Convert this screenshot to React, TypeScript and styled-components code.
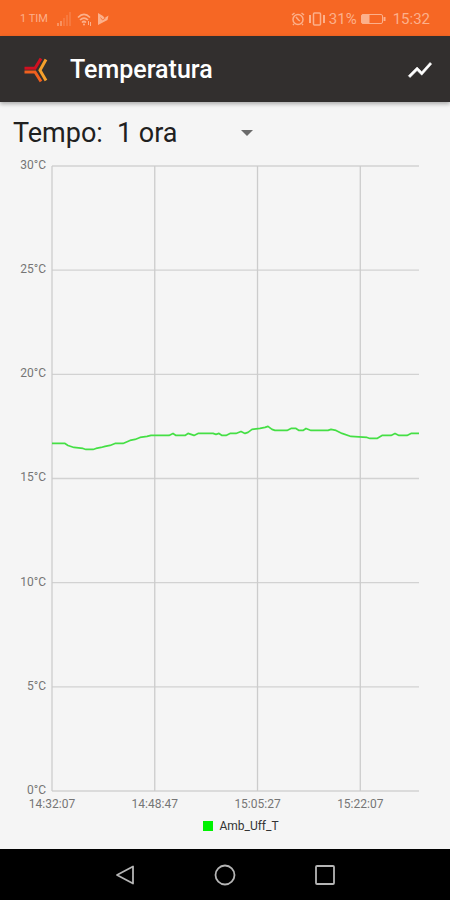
import React, { useState } from "react";
import styled, { createGlobalStyle } from "styled-components";

const GlobalStyle = createGlobalStyle`
  * { box-sizing: border-box; }
  body {
    margin: 0;
    background: #f5f5f5;
    font-family: Roboto, "Liberation Sans", sans-serif;
  }
`;

const Screen = styled.div`
  display: flex;
  flex-direction: column;
  min-height: 100vh;
  background: #f5f5f5;
`;

const StatusBar = styled.div`
  display: flex;
  justify-content: space-between;
  align-items: center;
  height: 36px;
  padding: 2px 20px 0;
  background: #f66724;
  color: #fcb08b;
`;

const StatusGroup = styled.div<{ $gap: number }>`
  display: flex;
  align-items: center;
  gap: ${(p) => p.$gap}px;
`;

const StatusText = styled.span<{ $size: number }>`
  font-size: ${(p) => p.$size}px;
  line-height: 18px;
`;

const Carrier = styled(StatusText)`
  margin-right: 4px;
`;

const Clock = styled(StatusText)`
  margin-left: 4px;
`;

const AppBar = styled.header`
  display: flex;
  align-items: center;
  height: 66px;
  padding: 2px 16px 0 24px;
  background: #322f2e;
  box-shadow: 0 2px 4px rgba(0, 0, 0, 0.3);
`;

const Title = styled.h1`
  flex: 1;
  margin: 0 0 0 21px;
  color: #fff;
  font-size: 25px;
  line-height: 32px;
  font-weight: 500;
`;

const IconButton = styled.button`
  display: flex;
  align-items: center;
  justify-content: center;
  padding: 0;
  border: 0;
  background: none;
  cursor: pointer;
`;

const Content = styled.main`
  flex: 1;
  display: flex;
  flex-direction: column;
  padding: 14px 31px 16px 13px;
`;

const Filter = styled.div`
  display: flex;
  align-items: center;
  height: 34px;
  color: #202020;
  font-size: 27px;
  line-height: 34px;
`;

const FilterLabel = styled.label`
  margin-right: 14px;
`;

const SelectWrap = styled.div`
  display: flex;
  align-items: center;
  width: 136px;
`;

const Select = styled.select`
  flex: 1;
  min-width: 0;
  padding: 0;
  border: 0;
  appearance: none;
  background: none;
  color: inherit;
  font: inherit;
`;

const Chart = styled.section`
  flex: 1;
  display: grid;
  grid-template-columns: 33px minmax(0, 1fr);
  grid-template-rows: 1fr auto auto;
  column-gap: 6px;
  padding-top: 16px;
`;

const YAxis = styled.div`
  display: flex;
  flex-direction: column;
  justify-content: space-between;
  margin: -7px 0 -5px;
  color: #757575;
  font-size: 12px;
  line-height: 12px;
  text-align: right;
`;

const Plot = styled.svg`
  display: block;
  width: 100%;
  height: 100%;
  min-height: 200px;
  overflow: visible;
  contain: size;
`;

const XAxis = styled.div`
  grid-column: 2;
  display: grid;
  grid-template-columns: repeat(4, 1fr);
  width: 112%;
  margin-left: -14%;
  padding-top: 7px;
  color: #757575;
  font-size: 12px;
  line-height: 12px;
  text-align: center;
`;

const Legend = styled.div`
  grid-column: 1 / -1;
  display: flex;
  align-items: center;
  justify-content: center;
  gap: 6px;
  margin: 9px 0 0 50px;
  color: #333;
  font-size: 12px;
  line-height: 14px;
`;

const Swatch = styled.span`
  width: 10px;
  height: 10px;
  background: #00f200;
`;

const NavBar = styled.nav`
  display: flex;
  align-items: center;
  justify-content: center;
  gap: 76px;
  height: 51px;
  background: #000;
`;

const X_SPAN = 367;
const Y_SPAN = 624;
const DEGREES = [30, 25, 20, 15, 10, 5, 0];
const TIMES = ["14:32:07", "14:48:47", "15:05:27", "15:22:07"];

const READINGS =
  "0,277 13,277 16,279 22,281 31,282 34,283 41,283 44,282 49,281 53,280 58,279 63,277 71,277 78,274 83,273 88,271 95,270 99,269 117,269 121,267 124,269 133,269 136,267 139,268 142,269 146,267 161,267 164,268 167,267 170,269 174,269 178,267 184,267 189,265 193,267 196,266 200,263 208,262 213,261 216,260 220,263 223,264 235,264 239,262 244,262 247,264 251,264 254,262 259,264 276,264 279,263 284,264 290,267 299,270 315,271 318,272 325,272 330,269 339,269 343,267 347,269 355,269 359,267 367,267";

function StatusIcons() {
  return (
    <>
      <svg width="15" height="14" viewBox="0 0 15 14" fill="currentColor">
        <path d="M0 11h2v3H0zM3 9h2v5H3z" opacity="0.6" />
        <path d="M6 6h2v8H6zM9 3h2v11H9zM12 0h2v14h-2z" opacity="0.25" />
      </svg>
      <svg width="15" height="13" viewBox="0 0 15 13" fill="none" stroke="currentColor" strokeWidth="1.700">
        <path d="M1 4.500Q7 -1.500 13 4.500M3 7Q7 3 11 7M5 9.500Q7 7.500 9 9.500" />
        <circle cx="7" cy="11.500" r="1" fill="currentColor" stroke="none" />
        <path d="M11.500 8v4M13.500 9v4" strokeWidth="1" />
      </svg>
      <svg width="12" height="12" viewBox="0 0 12 12" fill="currentColor">
        <path d="M1 0L6 3 7.500 5 11.500 2.500 10.500 7 1 12z" />
        <path d="M3.500 4.500l2 2.500 3-2" fill="none" stroke="#f66724" strokeWidth="0.800" />
      </svg>
    </>
  );
}

function AlarmIcon() {
  return (
    <svg width="14" height="14" viewBox="0 0 14 14" fill="none" stroke="currentColor" strokeWidth="1.500">
      <circle cx="7" cy="7.500" r="5" />
      <path d="M5 5l2.500 3L9 9M1 3l2.500-2M13 3l-2.500-2M3 12l-1 1M11 12l1 1" />
    </svg>
  );
}

function VibrateIcon() {
  return (
    <svg width="18" height="14" viewBox="0 0 18 14" fill="none" stroke="currentColor" strokeWidth="1.500">
      <rect x="5.500" y="1" width="7" height="12" rx="1" />
      <path d="M2 3v8M16 3v8" strokeWidth="2" />
    </svg>
  );
}

function BatteryIcon() {
  return (
    <svg width="26" height="12" viewBox="0 0 26 12" fill="none" stroke="currentColor">
      <rect x="1.500" y="1.500" width="21" height="9" rx="1.500" />
      <path d="M2 2h7v8H2z" fill="currentColor" />
      <path d="M24.500 4v4" strokeWidth="2" />
    </svg>
  );
}

function Logo() {
  return (
    <svg width="25" height="26" viewBox="0 0 25 26" fill="none" strokeWidth="3">
      <path d="M0.500 11.300H11L17 1.500" stroke="#d01020" />
      <path d="M0.500 15H11L17 24.500" stroke="#f0601e" />
      <path d="M22 2.500L16 13.200L22 23.500" stroke="#f5a02c" />
    </svg>
  );
}

export default function App() {
  const [range, setRange] = useState("1 ora");
  return (
    <>
      <GlobalStyle />
      <Screen>
        <StatusBar>
          <StatusGroup $gap={5}>
            <Carrier $size={11}>1 TIM</Carrier>
            <StatusIcons />
          </StatusGroup>
          <StatusGroup $gap={3}>
            <AlarmIcon />
            <VibrateIcon />
            <StatusText $size={15}>31%</StatusText>
            <BatteryIcon />
            <Clock $size={15}>15:32</Clock>
          </StatusGroup>
        </StatusBar>
        <AppBar>
          <Logo />
          <Title>Temperatura</Title>
          <IconButton aria-label="Grafico">
            <svg width="28" height="28" viewBox="0 0 24 24" fill="#fff" stroke="#fff" strokeWidth="0.500">
              <path d="M3.500 18.490l6-6.010 4 4L22 6.920l-1.410-1.410-7.090 7.970-4-4L2 16.990z" />
            </svg>
          </IconButton>
        </AppBar>
        <Content>
          <Filter>
            <FilterLabel htmlFor="range">Tempo:</FilterLabel>
            <SelectWrap>
              <Select id="range" value={range} onChange={(e) => setRange(e.target.value)}>
                <option>1 ora</option>
              </Select>
              <svg width="12" height="6" viewBox="0 0 12 6" fill="#6b6b6b" aria-hidden="true">
                <path d="M0 0h12L6 6z" />
              </svg>
            </SelectWrap>
          </Filter>
          <Chart>
            <YAxis>
              {DEGREES.map((d) => (
                <span key={d}>{d}°C</span>
              ))}
            </YAxis>
            <Plot viewBox={`0 0 ${X_SPAN} ${Y_SPAN}`} preserveAspectRatio="none" fill="none">
              {DEGREES.map((d) => {
                const y = Y_SPAN - (d / 30) * Y_SPAN;
                return <line key={d} x1="0" x2={X_SPAN} y1={y} y2={y} stroke="#d2d2d2" strokeWidth="1.300" vectorEffect="non-scaling-stroke" />;
              })}
              {TIMES.map((t, i) => {
                const x = i * 0.28 * X_SPAN;
                return <line key={t} x1={x} x2={x} y1="0" y2={Y_SPAN} stroke="#cccccc" strokeWidth="1.300" vectorEffect="non-scaling-stroke" />;
              })}
              <polyline points={READINGS} stroke="#45df45" strokeWidth="1.700" strokeLinejoin="round" vectorEffect="non-scaling-stroke" />
            </Plot>
            <XAxis>
              {TIMES.map((t) => (
                <span key={t}>{t}</span>
              ))}
            </XAxis>
            <Legend>
              <Swatch />
              Amb_Uff_T
            </Legend>
          </Chart>
        </Content>
        <NavBar>
          <IconButton aria-label="Indietro">
            <svg width="24" height="24" viewBox="0 0 24 24" fill="none" stroke="#b5b5b5" strokeWidth="1.800" strokeLinejoin="round">
              <path d="M20 3.500v17L4 12z" />
            </svg>
          </IconButton>
          <IconButton aria-label="Home">
            <svg width="24" height="24" viewBox="0 0 24 24" fill="none" stroke="#b5b5b5" strokeWidth="1.800">
              <circle cx="12" cy="12" r="9.500" />
            </svg>
          </IconButton>
          <IconButton aria-label="Recenti">
            <svg width="24" height="24" viewBox="0 0 24 24" fill="none" stroke="#b5b5b5" strokeWidth="1.800">
              <rect x="3" y="3" width="18" height="18" rx="1" />
            </svg>
          </IconButton>
        </NavBar>
      </Screen>
    </>
  );
}
